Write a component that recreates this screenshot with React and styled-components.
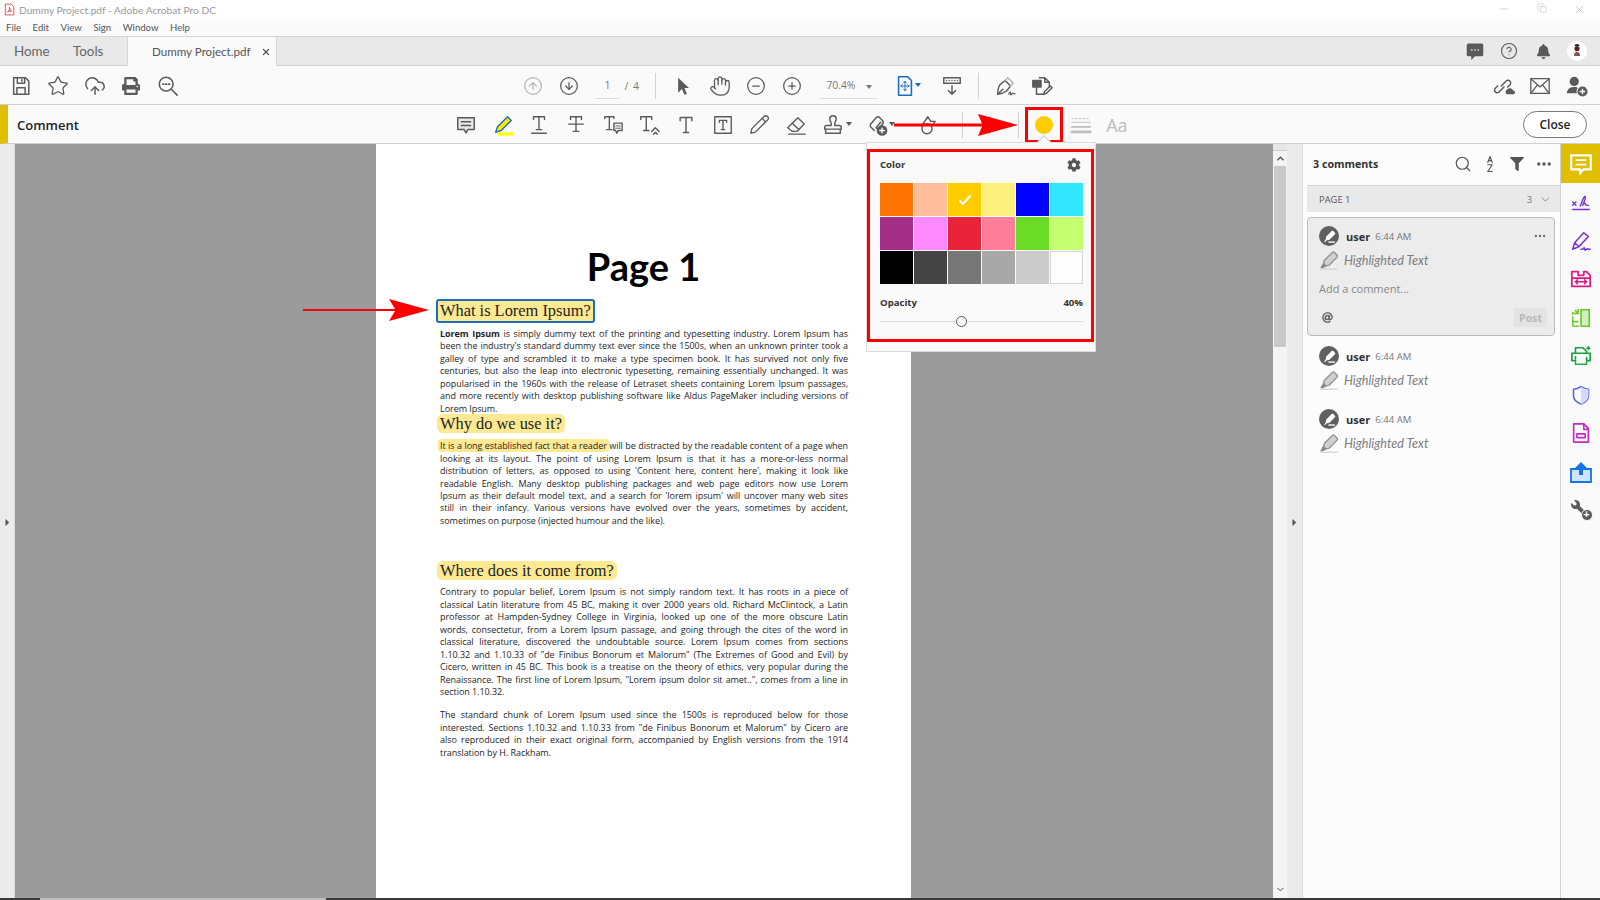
import React from 'react';
import styled, { createGlobalStyle } from 'styled-components';
import {
  Star, CloudUpload, CircleArrowUp, CircleArrowDown, CircleMinus, CirclePlus, Hand,
  Search, ChevronDown, ChevronUp, CircleHelp, Pencil, Ellipsis, X, Minus, Copy,
} from 'lucide-react';
import { FaCog, FaBell, FaFilter, FaPrint, FaCaretRight, FaWrench, FaAt } from 'react-icons/fa';

const GlobalStyle = createGlobalStyle`
  html, body { margin: 0; padding: 0; height: 100%; background: #fff; }
  body { font-family: "Open Sans", "Liberation Sans", sans-serif; overflow: hidden; }
  * { box-sizing: border-box; }
`;

const Window = styled.div`
  position: relative;
  width: 1600px;
  height: 900px;
  display: flex;
  flex-direction: column;
  overflow: hidden;
  background: #fafafa;
`;

const TitleBar = styled.div`
  height: 19px;
  flex: none;
  background: #fff;
  display: flex;
  align-items: center;
  padding-left: 3px;
  color: #9a9a9a;
  font-family: Lato, sans-serif;
  font-size: 10.2px;
`;

const TitleText = styled.span`
  margin-left: 3px;
`;

const WindowControls = styled.div`
  margin-left: auto;
  margin-right: 2px;
  display: flex;
  color: #a5a5a5;
`;

const WindowControl = styled.div`
  width: 37.5px;
  display: flex;
  justify-content: center;
`;

const MenuBar = styled.div`
  height: 18px;
  flex: none;
  background: #fafafa;
  border-bottom: 1px solid #d5d5d5;
  display: flex;
  align-items: center;
  padding-left: 6px;
  gap: 11.5px;
  font-family: Lato, sans-serif;
  font-size: 9.6px;
  color: #555;
`;

const TabBar = styled.div`
  height: 29px;
  flex: none;
  background: #e9e9e9;
  border-bottom: 1px solid #d5d5d5;
  display: flex;
  align-items: stretch;
  color: #666;
`;

const PlainTab = styled.div`
  font-family: Lato, sans-serif;
  font-size: 13.4px;
  width: ${(p) => p.$w}px;
  display: flex;
  align-items: center;
  margin-left: ${(p) => p.$ml}px;
`;

const ActiveTab = styled.div`
  width: 150px;
  margin-left: 25px;
  margin-bottom: -1px;
  background: #fafafa;
  border-left: 1px solid #d5d5d5;
  border-right: 1px solid #d5d5d5;
  display: flex;
  align-items: center;
  padding-left: 24px;
  font-family: Lato, sans-serif;
  font-size: 11.6px;
  white-space: nowrap;
  color: #555;
`;

const TabClose = styled.span`
  display: flex;
  margin-left: 10px;
  color: #555;
`;

const TabRight = styled.div`
  margin-left: auto;
  margin-right: 6px;
  display: flex;
  align-items: center;
`;

const ToolBar = styled.div`
  height: 39px;
  flex: none;
  padding: 1px 0 0 3px;
  background: #fafafa;
  border-bottom: 1px solid #d0d0d0;
  display: flex;
  align-items: center;
`;

const Cell = styled.div`
  flex: none;
  width: ${(p) => p.$w || 36.7}px;
  margin-left: ${(p) => p.$ml || 0}px;
  height: 30px;
  display: flex;
  align-items: center;
  justify-content: ${(p) => (p.$start ? 'flex-start' : 'center')};
  color: ${(p) => p.$c || '#5a5a5a'};
  position: relative;
`;

const CellIcon = styled.span`
  display: flex;
  margin-left: ${(p) => p.$ml}px;
`;

const Caret = styled.span`
  position: absolute;
  left: ${(p) => p.$x}px;
  top: 12px;
  width: 0;
  height: 0;
  border-left: 3px solid transparent;
  border-right: 3px solid transparent;
  border-top: 4px solid ${(p) => p.$c || '#5a5a5a'};
`;

const PageField = styled.div`
  margin-left: 8px;
  width: 24px;
  height: 26px;
  border-bottom: 1px solid #ddd;
  display: flex;
  align-items: center;
  justify-content: center;
  font-size: 10.5px;
  color: #777;
`;

const PageTotal = styled.div`
  margin-left: 5px;
  width: 20px;
  font-size: 10.5px;
  color: #777;
  word-spacing: 2px;
`;

const Separator = styled.div`
  flex: none;
  width: 1px;
  height: 26px;
  margin-left: ${(p) => p.$ml}px;
  background: #d2d2d2;
`;

const ZoomField = styled.div`
  margin-left: 10px;
  width: 58px;
  height: 26px;
  border-bottom: 1px solid #ddd;
  display: flex;
  align-items: center;
  padding-left: 6px;
  font-size: 10.3px;
  color: #777;
  position: relative;
`;

const RightGroup = styled.div`
  margin-left: auto;
  margin-right: 5px;
  display: flex;
`;

const CommentBar = styled.div`
  height: 39px;
  flex: none;
  position: relative;
  padding-top: 1px;
  background: #fafafa;
  border-bottom: 1px solid #d0d0d0;
  border-left: 8px solid #e0bf00;
  display: flex;
  align-items: center;
`;

const CommentTitle = styled.div`
  width: 439.6px;
  padding-left: 9px;
  font-size: 13px;
  font-weight: 600;
  color: #222;
`;

const ColorButton = styled.div`
  flex: none;
  position: relative;
  margin-left: 6px;
  width: 38px;
  height: 36px;
  border: 3px solid #f00;
  display: flex;
  align-items: center;
  justify-content: center;
`;

const ColorDot = styled.div`
  width: 18px;
  height: 18px;
  border-radius: 50%;
  background: #ffcc00;
`;

const AaLabel = styled.div`
  font-size: 18px;
  color: #bdbdbd;
`;

const CloseButton = styled.button`
  margin-left: auto;
  margin-right: 13px;
  width: 64px;
  height: 27px;
  border-radius: 14px;
  border: 1px solid #777;
  background: #fff;
  font-family: "Open Sans", sans-serif;
  font-size: 12px;
  font-weight: 600;
  color: #222;
`;

const Annotation = styled.svg`
  position: absolute;
  z-index: 5;
  left: ${(p) => p.$x}px;
  top: ${(p) => p.$y}px;
`;

const Main = styled.div`
  flex: 1;
  min-height: 0;
  display: flex;
  position: relative;
`;

const CollapseStrip = styled.div`
  flex: none;
  width: ${(p) => p.$w}px;
  background: #ebebeb;
  display: flex;
  align-items: center;
  justify-content: center;
  padding-top: 2px;
  color: #555;
  border-right: 1px solid #dcdcdc;
`;

const DocArea = styled.div`
  flex: none;
  position: relative;
  width: 1258px;
  background: #9b9b9b;
  padding-left: 361px;
`;

const PageSheet = styled.div`
  width: 535px;
  height: 100%;
  background: #fff;
  padding-top: 100px;
  color: #1e1e1e;
`;

const PageHeading = styled.div`
  height: 44px;
  line-height: 44px;
  text-align: center;
  font-family: Lato, "Liberation Sans", sans-serif;
  font-weight: 700;
  font-size: 38px;
  color: #000;
  margin-bottom: 11px;
`;

const SectionHeading = styled.div`
  margin-left: ${(p) => (p.$focused ? 60 : 61)}px;
  margin-top: ${(p) => p.$mt}px;
  width: fit-content;
  height: ${(p) => (p.$focused ? 24 : 19)}px;
  padding: 0 ${(p) => (p.$focused ? 2 : 3)}px;
  line-height: ${(p) => (p.$focused ? 20 : 19)}px;
  font-family: "Liberation Serif", serif;
  font-size: 16.4px;
  color: #222;
  background: #fde992;
  border-radius: ${(p) => (p.$focused ? 3 : 6)}px;
  border: ${(p) => (p.$focused ? '2px solid #1a6cc0' : 'none')};
`;

const Paragraph = styled.div`
  margin-left: 64px;
  margin-top: ${(p) => p.$mt}px;
  width: 408px;
  font-size: 9px;
  letter-spacing: -0.05px;
  line-height: 12.45px;
`;

const Line = styled.div`
  text-align: justify;
  text-align-last: ${(p) => (p.$last ? 'left' : 'justify')};
`;

const Marked = styled.span`
  background: #fde992;
  box-shadow: 2px 0 0 #fde992, -2px 0 0 #fde992;
  border-radius: 3px;
`;

const ScrollBar = styled.div`
  flex: none;
  width: 14px;
  background: #f4f4f4;
  position: relative;
  display: flex;
  flex-direction: column;
  align-items: center;
  color: #444;
`;

const ScrollCap = styled.div`
  width: 100%;
  height: 7px;
  background: #e6e6e6;
  border-bottom: 1px solid #cfcfcf;
`;

const ScrollArrow = styled.div`
  display: flex;
  height: ${(p) => p.$h}px;
  align-items: center;
  margin-top: ${(p) => p.$mt || 0}px;
`;

const ScrollThumb = styled.div`
  width: 12px;
  height: 181px;
  background: #c9c9c9;
`;

const Panel = styled.div`
  flex: none;
  width: 258px;
  background: #fcfcfc;
  border-right: 1px solid #d0d0d0;
  display: flex;
  flex-direction: column;
`;

const PanelHead = styled.div`
  height: 41px;
  flex: none;
  display: flex;
  align-items: center;
  padding: 0 0 2px 10px;
  font-size: 10.7px;
  font-weight: 700;
  color: #333;
`;

const PanelTools = styled.div`
  margin-left: auto;
  display: flex;
  margin-right: 3px;
  color: #555;
`;

const PanelTool = styled.div`
  width: 27px;
  display: flex;
  justify-content: center;
  align-items: center;
`;

const PageRow = styled.div`
  height: 27px;
  flex: none;
  margin-left: 4px;
  background: #e9e9e9;
  border-top: 1px solid #d5d5d5;
  display: flex;
  align-items: center;
  padding-left: 12px;
  font-size: 9.4px;
  color: #555;
`;

const PageCount = styled.div`
  margin-left: auto;
  margin-right: 8px;
  display: flex;
  align-items: center;
  gap: 7px;
  color: #777;
`;

const ActiveCard = styled.div`
  margin: 5px 5px 0 4px;
  height: 119px;
  flex: none;
  background: #ececec;
  border: 1px solid #bdbdbd;
  border-radius: 4px;
  padding: 8px 7px 0 11px;
  display: flex;
  flex-direction: column;
`;

const PlainCard = styled.div`
  margin: ${(p) => p.$mt}px 0 0 4px;
  padding: 0 12px;
  display: flex;
  flex-direction: column;
`;

const CardHead = styled.div`
  display: flex;
  align-items: center;
  height: 20px;
`;

const Avatar = styled.div`
  width: 20px;
  height: 20px;
  border-radius: 50%;
  background: #606060;
  color: #fff;
  display: flex;
  align-items: center;
  justify-content: center;
`;

const UserName = styled.div`
  margin-left: 7px;
  font-size: 11px;
  font-weight: 700;
  color: #333;
`;

const TimeStamp = styled.div`
  margin-left: 5px;
  font-size: 9.6px;
  color: #777;
`;

const CardMenu = styled.div`
  margin-left: auto;
  display: flex;
  color: #666;
`;

const TypeRow = styled.div`
  display: flex;
  align-items: center;
  margin-top: 4px;
  height: 20px;
  color: #8c8c8c;
`;

const TypeLabel = styled.span`
  margin-left: 5px;
  font-family: Lato, sans-serif;
  font-style: italic;
  font-size: 12.6px;
  color: #7d7d7d;
`;

const AddComment = styled.div`
  margin-top: 9px;
  height: 18px;
  font-size: 11px;
  color: #888;
  display: flex;
  align-items: center;
`;

const CardFoot = styled.div`
  margin-top: 11px;
  display: flex;
  align-items: center;
  justify-content: space-between;
  color: #666;
  padding-left: 3px;
`;

const PostButton = styled.div`
  width: 33px;
  height: 19px;
  border-radius: 2px;
  background: #e3e3e3;
  color: #b8b8b8;
  font-size: 10.5px;
  font-weight: 700;
  display: flex;
  align-items: center;
  justify-content: center;
`;

const Rail = styled.div`
  flex: none;
  width: 39px;
  background: #fafafa;
  display: flex;
  flex-direction: column;
  align-items: center;
`;

const RailItem = styled.div`
  width: 39px;
  height: ${(p) => p.$h || 38.5}px;
  display: flex;
  align-items: center;
  justify-content: center;
  background: ${(p) => (p.$active ? '#e0bf00' : 'transparent')};
`;

const Popover = styled.div`
  position: absolute;
  z-index: 4;
  left: 866px;
  top: -2px;
  width: 230px;
  height: 210px;
  background: #fafafa;
  border: 1px solid #dcdcdc;
  padding-top: 6px;
`;

const PopArrow = styled.div`
  position: absolute;
  left: 172px;
  top: -6px;
  width: 10px;
  height: 10px;
  background: #fafafa;
  border-left: 1px solid #ccc;
  border-top: 1px solid #ccc;
  transform: rotate(45deg);
`;

const PopFrame = styled.div`
  width: 227px;
  height: 193px;
  border: 3px solid #f00;
  padding: 0 8px 0 10px;
`;

const PopHead = styled.div`
  height: 31px;
  padding: 6px 2px 0 0;
  display: flex;
  align-items: flex-start;
  justify-content: space-between;
  font-size: 9.6px;
  font-weight: 700;
  color: #333;
`;

const Swatches = styled.div`
  display: grid;
  grid-template-columns: repeat(6, 33px);
  grid-auto-rows: 33px;
  gap: 1px;
`;

const Swatch = styled.div`
  background: ${(p) => p.$color};
  border: ${(p) => (p.$light ? '1px solid #d5d5d5' : 'none')};
  display: flex;
  align-items: center;
  justify-content: center;
`;

const OpacityRow = styled.div`
  margin-top: 12px;
  display: flex;
  justify-content: space-between;
  font-size: 9.6px;
  font-weight: 700;
  color: #333;
`;

const SliderTrack = styled.div`
  position: relative;
  margin-top: 12px;
  height: 1px;
  background: #ddd;
`;

const SliderThumb = styled.div`
  position: absolute;
  left: 76px;
  top: -5px;
  width: 11px;
  height: 11px;
  border-radius: 50%;
  background: #fafafa;
  border: 1px solid #555;
`;

const BottomBar = styled.div`
  flex: none;
  height: 2px;
  background: #3a3a3a;
  padding-left: 40px;
`;

const BottomThumb = styled.div`
  width: 286px;
  height: 2px;
  background: #bfbfbf;
`;

const PlusDot = styled.span`
  position: absolute;
  right: -2px;
  bottom: -1px;
  width: 12px;
  height: 12px;
  border-radius: 50%;
  background: #5a5a5a;
  border: 1px solid #fafafa;
  color: #fff;
  font-size: 11px;
  line-height: 9px;
  text-align: center;
  font-weight: 700;
  font-family: "Liberation Sans", sans-serif;
`;

const ToolsWrap = styled.span`
  position: relative;
  display: flex;
  width: 20px;
  height: 20px;
  color: #5a5a5a;
`;

// icons
const Ico = ({ s = 22, w = 1.6, children, color }) => (
  <svg width={s} height={s} viewBox="0 0 24 24" fill="none" stroke="currentColor" strokeWidth={w} strokeLinecap="round" strokeLinejoin="round" color={color}>
    {children}
  </svg>
);

const SaveIcon = () => (
  <Ico><path d="M4 3h13l3.500 3.500V21H4z" /><path d="M8 3v6h8V3M13 5v2M7.500 21v-7h9v7" /></Ico>
);
const PdfIcon = () => (
  <Ico s={13} w={1.5} color="#d9342b"><path d="M5 2h10l5 5v15H5z" /><path d="M9 16c2-1 3.500-4 3-8 .8 4 2 6 4 7-2-.2-5 .2-7 1z" /></Ico>
);
const ZoomDotsIcon = () => (
  <Ico w={1.7}><circle cx="10" cy="10" r="7.500" /><path d="M15.500 15.500L22 22" /><path d="M6.500 10h.8M9.700 10h.8M12.900 10h.8" strokeWidth="2" /></Ico>
);
const CursorIcon = () => (
  <svg width="20" height="22" viewBox="0 0 24 24" fill="currentColor"><path d="M5 2l0 18 4.500-4.500 3 7 3-1.300-3-6.700H18z" /></svg>
);
const FitIcon = () => (
  <Ico s={22} w={1.7} color="#1a6cc0"><path d="M5 2h10l4 4v16H5z" /><path d="M12 7v10M7.500 12h9M12 7l-1.500 1.500M12 7l1.500 1.500M12 17l-1.500-1.500M12 17l1.500-1.500M7.500 12l1.500-1.500M7.500 12L9 13.500M16.500 12L15 10.500M16.500 12L15 13.500" strokeWidth="1" /></Ico>
);
const ReadIcon = () => (
  <Ico><rect x="3" y="3" width="18" height="6" /><path d="M6 6h.01M9 6h.01M12 6h.01M15 6h.01M18 6h.01M12 12v9M8 17l4 4 4-4" /></Ico>
);
const SignPenIcon = () => (
  <Ico w={1.6}>
    <path d="M3 21c0-5 .5-8 2.500-10.500L11 6l6 6-4.500 5.500C10 19.500 7 20.500 3 21z" />
    <path d="M3 21l5.500-5.500" />
    <path d="M11 6l3-3 6 6-3 3" stroke="#b5b5b5" />
    <path d="M15 21c1-3 2-3 2-.5s1.500.5 2-.5 1 1 3 .5" strokeWidth="1.300" />
  </Ico>
);
const EditDocIcon = () => (
  <Ico w={1.6}>
    <path d="M9 3h6l5 5v5M15 3v5h5" />
    <path d="M6 13v8h8" />
    <rect x="2" y="6" width="9" height="7" fill="currentColor" />
    <path d="M14 21l.8-3L21 12l2 2-6 6z" />
  </Ico>
);
const LinkCloudIcon = () => (
  <Ico><path d="M9 12l6-6a3 3 0 014 4l-3 3M12 13l-6 6a3 3 0 01-4-4l3-3" /><path d="M15 21a3 3 0 010-5 4 4 0 017 1 2 2 0 010 4z" fill="currentColor" stroke="none" /></Ico>
);
const MailIcon = () => (
  <Ico w={1.4}><rect x="2" y="4" width="20" height="16" /><path d="M2 4l10 9 10-9M2 20l7-9M22 20l-7-9" /></Ico>
);
const AddUserIcon = () => (
  <svg width="22" height="22" viewBox="0 0 24 24" fill="currentColor">
    <circle cx="9" cy="7" r="5" />
    <path d="M1 20c0-5 4-7 8-7 2 0 3 .5 4 1-1.500 1.500-2 4-1 6z" />
    <circle cx="18" cy="18" r="5.500" />
    <path d="M18 15v6M15 18h6" stroke="#fafafa" strokeWidth="1.500" />
  </svg>
);
const ChatFilled = () => (
  <svg width="18" height="18" viewBox="0 0 24 24" fill="currentColor">
    <path d="M3 2h18a2 2 0 012 2v13a2 2 0 01-2 2H12l-5 5v-5H3a2 2 0 01-2-2V4a2 2 0 012-2z" />
    <path d="M7 10.500h1.500M11.300 10.500h1.500M15.600 10.500h1.500" stroke="#e9e9e9" strokeWidth="2.200" />
  </svg>
);
const UserPhoto = () => (
  <svg width="20" height="20" viewBox="0 0 20 20">
    <circle cx="10" cy="10" r="10" fill="#fff" />
    <path d="M7 15c0-3 1-4 3-4s3 1 3 4z" fill="#7a5a52" />
    <circle cx="10" cy="7.500" r="2.600" fill="#4a2b26" />
    <path d="M7.500 5a2.500 2 0 015 0z" fill="#222" />
    <path d="M9.500 10.500l1 3" stroke="#c33" strokeWidth="1" />
  </svg>
);
const CommentIcon = () => (
  <Ico w={1.6}><path d="M3 4h18v13h-7l-2 3.500-2-3.500H3z" fill="#e7e7e7" /><path d="M7 8.500h10M7 12.500h10" /></Ico>
);
const HighlighterIcon = () => (
  <svg width="22" height="22" viewBox="0 0 24 24" fill="none">
    <path d="M4 20l2-6L17 3l4 4-11 11z" fill="#ffe600" stroke="#1a6cc0" strokeWidth="1.500" strokeLinejoin="round" />
    <rect x="6" y="20" width="17" height="3.500" fill="#ffff00" />
  </svg>
);
const TUnderIcon = () => (
  <Ico w={1.5}><path d="M6 6V3h12v3M12 3v14M9 17h6M4 21h16" /></Ico>
);
const TStrikeIcon = () => (
  <Ico w={1.5}><path d="M6 6V3h12v3M12 3v16M9 19h6M4 11h16" /></Ico>
);
const TNoteIcon = () => (
  <Ico w={1.5}><path d="M3 5V3h10v2M8 3v14M5 17h6M13 10h9v8h-4l-2 3-1-3h-2z" /><path d="M15 13h5M15 15.500h5" strokeWidth="1" /></Ico>
);
const TCaretIcon = () => (
  <Ico w={1.5}><path d="M3 6V3h12v3M9 3v15M6 18h6M15 19l4-4 4 4M17 22l2-2 2 2" /></Ico>
);
const TPlainIcon = () => (
  <Ico s={20} w={1.7}><path d="M5 7V3h14v4M12 3v18M9 21h6" /></Ico>
);
const TBoxIcon = () => (
  <Ico w={1.5}><rect x="3" y="3" width="18" height="18" /><path d="M8 9V7h8v2M12 7v10M10 17h4" /></Ico>
);
const EraserIcon = () => (
  <Ico w={1.5}><path d="M3 15L14 4l7 7-8 8H8z" /><path d="M8 10l7 7" /><path d="M4 22h18" /></Ico>
);
const StampIcon = () => (
  <Ico w={1.6}><path d="M12 2a3.500 3.500 0 013.500 3.500c0 2-1.500 3-1.500 5v2h5a2 2 0 012 2v2H3v-2a2 2 0 012-2h5v-2c0-2-1.500-3-1.500-5A3.500 3.500 0 0112 2zM4 17v4h16v-4" /></Ico>
);
const AttachIcon = () => (
  <Ico w={1.6}><path d="M9 18l-3-3a3 3 0 010-5l5-6a3 3 0 014 0l3 3a3 3 0 010 4l-5 6-2-2 5-6" /><circle cx="17.500" cy="18" r="5" fill="#5a5a5a" /><path d="M17.500 15.500v5M15 18h5" stroke="#fff" /></Ico>
);
const ShapeIcon = () => (
  <Ico w={1.5} s={22}><path d="M6 13l7-10 3 5h5l-4 5" /><circle cx="12" cy="16" r="5.500" /></Ico>
);
const BlueChevron = () => (
  <Ico w={2} color="#1a6cc0"><path d="M7 4l10 8-10 8" /></Ico>
);
const LineWeightIcon = () => (
  <Ico s={22} w={1} color="#bdbdbd">
    <path d="M2 5h2M6 5h2M10 5h2M14 5h2M18 5h2M2 9h20" />
    <path d="M2 14h20" strokeWidth="2" />
    <path d="M2 19.500h20" strokeWidth="3" />
  </Ico>
);
const Marker = () => (
  <svg width="13" height="13" viewBox="0 0 24 24" fill="#fff">
    <path d="M5 17l1-5L16 2c1-1 2-1 3 0l3 3c1 1 1 2 0 3L12 18l-5 1-3 3H2z" />
    <rect x="10" y="21" width="12" height="2.500" />
  </svg>
);
const MarkerRow = () => (
  <svg width="20" height="19" viewBox="0 0 24 24" fill="none" stroke="#8a8a8a" strokeWidth="1.500" strokeLinejoin="round">
    <path d="M5 16l1-4L16 2c1-1 2-1 3 0l3 3c1 1 1 2 0 3L12 18l-4 1z" fill="#cfcfcf" />
    <path d="M5 16l3 3-4 2-2 0z" fill="#8a8a8a" />
    <rect x="1" y="22" width="22" height="2" fill="#d9d9d9" stroke="none" />
  </svg>
);
const RailComment = () => (
  <svg width="26" height="26" viewBox="0 0 24 24" fill="none" stroke="#fff" strokeWidth="2" strokeLinejoin="round">
    <path d="M3 4h18v13h-7l-3 4v-4H3z" />
    <path d="M7 8.500h10M7 12.500h10" strokeWidth="1.600" />
  </svg>
);
const RailFillSign = () => (
  <Ico s={20} w={1.7} color="#7a33d6"><path d="M2 12l4 4M6 12l-4 4M2 21h20M11 17c2-4 4-12 6-12 1 3-2 8-3 11 1-2 2-4 3-2 0 2 1 2 4 2" /></Ico>
);
const RailSign = () => (
  <Ico s={22} w={1.7} color="#7a33d6"><path d="M3 21l2-7L15 3l5 4-10 11zM5 14l5 4M12 21h2c1-2 2-2 2 0s2 0 2 0 1-1 2 0h2" /></Ico>
);
const RailEdit = () => (
  <Ico s={22} w={1.9} color="#d91b86"><path d="M2 4h7v4h6V4h3l4 4v12H2zM2 11h20" /><path d="M6 15h12M6 15l2-2M6 15l2 2M18 15l-2-2M18 15l-2 2" /></Ico>
);
const RailOrganize = () => (
  <Ico s={22} w={1.8} color="#6bc62c"><rect x="12" y="3" width="9" height="18" fill="#d5f0c0" /><path d="M3 11v10h7M3 8V6M3 16h6M6 4l3 3M9 3v4H5" strokeDasharray="2 1.500" /></Ico>
);
const RailPrint = () => (
  <Ico s={22} w={1.8} color="#18a03a"><path d="M2 17V9h20v8h-3M5 17H2M6 9V3h8l4 4v2" /><path d="M6 13v8h12v-8" strokeDasharray="2 1.600" /><path d="M20 2v3M18.500 3.500h3" /></Ico>
);
const RailShield = () => (
  <svg width="20" height="24" viewBox="0 0 24 24" fill="none" stroke="#5560e8" strokeWidth="1.800" strokeLinejoin="round">
    <path d="M12 2c3 2 6 3 9 3v8c0 4-4 8-9 10-5-2-9-6-9-10V5c3 0 6-1 9-3z" />
    <path d="M12 2c3 2 6 3 9 3v8c0 4-4 8-9 10z" fill="#d6d9fb" stroke="none" />
  </svg>
);
const RailDoc = () => (
  <Ico s={22} w={1.8} color="#c42bc4"><path d="M4 2h11l5 5v15H4z" /><path d="M15 2v6h5" /><rect x="7.500" y="13" width="9" height="4" /></Ico>
);
const RailShare = () => (
  <svg width="24" height="24" viewBox="0 0 24 24" fill="none" stroke="#1473e6" strokeWidth="1.800">
    <path d="M6 9H2v13h20V9h-4z" fill="#cfe3fa" />
    <path d="M12 2l6 6h-4v7h-4V8H6z" fill="#1473e6" stroke="none" />
  </svg>
);
const RailTools = () => (
  <ToolsWrap>
    <FaWrench size={16} style={{ transform: 'scaleX(-1)' }} />
    <PlusDot>+</PlusDot>
  </ToolsWrap>
);
const AzIcon = () => (
  <Ico s={18} w={1.5}><path d="M9 10l3-8 3 8M10 7.500h4M9 13h6l-6 9h6" /></Ico>
);

const SWATCHES = [
  '#ff7300', '#ffbe9b', '#ffcc00', '#fff180', '#0000ff', '#33e6ff',
  '#a42e85', '#ff8aff', '#e8233a', '#ff7f9b', '#6adb26', '#c3ff70',
  '#000000', '#444444', '#777777', '#a8a8a8', '#cbcbcb', '#fdfdfd',
];

const PARA_ONE = [
  <><b>Lorem Ipsum</b> is simply dummy text of the printing and typesetting industry. Lorem Ipsum has</>,
  "been the industry's standard dummy text ever since the 1500s, when an unknown printer took a",
  'galley of type and scrambled it to make a type specimen book. It has survived not only five',
  'centuries, but also the leap into electronic typesetting, remaining essentially unchanged. It was',
  'popularised in the 1960s with the release of Letraset sheets containing Lorem Ipsum passages,',
  'and more recently with desktop publishing software like Aldus PageMaker including versions of',
  'Lorem Ipsum.',
];
const PARA_TWO = [
  <><Marked>It is a long established fact that a reader</Marked> will be distracted by the readable content of a page when</>,
  'looking at its layout. The point of using Lorem Ipsum is that it has a more-or-less normal',
  "distribution of letters, as opposed to using 'Content here, content here', making it look like",
  'readable English. Many desktop publishing packages and web page editors now use Lorem',
  "Ipsum as their default model text, and a search for 'lorem ipsum' will uncover many web sites",
  'still in their infancy. Various versions have evolved over the years, sometimes by accident,',
  'sometimes on purpose (injected humour and the like).',
];
const PARA_THREE = [
  'Contrary to popular belief, Lorem Ipsum is not simply random text. It has roots in a piece of',
  'classical Latin literature from 45 BC, making it over 2000 years old. Richard McClintock, a Latin',
  'professor at Hampden-Sydney College in Virginia, looked up one of the more obscure Latin',
  'words, consectetur, from a Lorem Ipsum passage, and going through the cites of the word in',
  'classical literature, discovered the undoubtable source. Lorem Ipsum comes from sections',
  '1.10.32 and 1.10.33 of "de Finibus Bonorum et Malorum" (The Extremes of Good and Evil) by',
  'Cicero, written in 45 BC. This book is a treatise on the theory of ethics, very popular during the',
  'Renaissance. The first line of Lorem Ipsum, "Lorem ipsum dolor sit amet..", comes from a line in',
  'section 1.10.32.',
];
const PARA_FOUR = [
  'The standard chunk of Lorem Ipsum used since the 1500s is reproduced below for those',
  'interested. Sections 1.10.32 and 1.10.33 from "de Finibus Bonorum et Malorum" by Cicero are',
  'also reproduced in their exact original form, accompanied by English versions from the 1914',
  'translation by H. Rackham.',
];

const Lines = ({ items, mt }) => (
  <Paragraph $mt={mt}>
    {items.map((text, i) => (
      <Line key={i} $last={i === items.length - 1}>{text}</Line>
    ))}
  </Paragraph>
);

const CardTop = () => (
  <>
    <Avatar><Marker /></Avatar>
    <UserName>user</UserName>
    <TimeStamp>6:44 AM</TimeStamp>
  </>
);

const App = () => (
  <Window>
    <GlobalStyle />
    <TitleBar>
      <PdfIcon />
      <TitleText>Dummy Project.pdf - Adobe Acrobat Pro DC</TitleText>
      <WindowControls>
        <WindowControl><Minus size={12} strokeWidth={1} /></WindowControl>
        <WindowControl><Copy size={10} strokeWidth={1} /></WindowControl>
        <WindowControl><X size={13} strokeWidth={1} /></WindowControl>
      </WindowControls>
    </TitleBar>
    <MenuBar>
      <span>File</span><span>Edit</span><span>View</span><span>Sign</span><span>Window</span><span>Help</span>
    </MenuBar>
    <TabBar>
      <PlainTab $ml={14} $w={34}>Home</PlainTab>
      <PlainTab $ml={25} $w={29}>Tools</PlainTab>
      <ActiveTab>
        Dummy Project.pdf
        <TabClose><X size={10} strokeWidth={3} /></TabClose>
      </ActiveTab>
      <TabRight>
        <Cell $w={34}><ChatFilled /></Cell>
        <Cell $w={34}><CircleHelp size={18} strokeWidth={1.5} /></Cell>
        <Cell $w={34}><FaBell size={15} /></Cell>
        <Cell $w={34}><UserPhoto /></Cell>
      </TabRight>
    </TabBar>
    <ToolBar>
      <Cell><SaveIcon /></Cell>
      <Cell><Star size={22} strokeWidth={1.4} /></Cell>
      <Cell><CloudUpload size={22} strokeWidth={1.6} /></Cell>
      <Cell><FaPrint size={18} /></Cell>
      <Cell><ZoomDotsIcon /></Cell>
      <Cell $w={36.5} $ml={328} $c="#b5b5b5"><CircleArrowUp size={20} strokeWidth={1.5} /></Cell>
      <Cell $w={36.5}><CircleArrowDown size={20} strokeWidth={1.5} /></Cell>
      <PageField>1</PageField>
      <PageTotal>/ 4</PageTotal>
      <Separator $ml={11} />
      <Cell $w={36} $ml={10}><CursorIcon /></Cell>
      <Cell $w={36}><Hand size={22} strokeWidth={1.4} /></Cell>
      <Cell $w={36}><CircleMinus size={20} strokeWidth={1.5} /></Cell>
      <Cell $w={36}><CirclePlus size={20} strokeWidth={1.5} /></Cell>
      <ZoomField>70.4%<Caret $x={46} $c="#777" /></ZoomField>
      <Cell $w={36} $ml={14} $start><CellIcon $ml={2}><FitIcon /></CellIcon><Caret $x={23} $c="#1a6cc0" /></Cell>
      <Cell $w={36} $ml={6}><ReadIcon /></Cell>
      <Separator $ml={8} />
      <Cell $w={36} $ml={9}><SignPenIcon /></Cell>
      <Cell $w={36}><EditDocIcon /></Cell>
      <RightGroup>
        <Cell $w={36.5}><LinkCloudIcon /></Cell>
        <Cell $w={36.5}><MailIcon /></Cell>
        <Cell $w={36.5}><AddUserIcon /></Cell>
      </RightGroup>
    </ToolBar>
    <CommentBar>
      <CommentTitle>Comment</CommentTitle>
      <Cell><CommentIcon /></Cell>
      <Cell><HighlighterIcon /></Cell>
      <Cell><TUnderIcon /></Cell>
      <Cell><TStrikeIcon /></Cell>
      <Cell><TNoteIcon /></Cell>
      <Cell><TCaretIcon /></Cell>
      <Cell><TPlainIcon /></Cell>
      <Cell><TBoxIcon /></Cell>
      <Cell><Pencil size={21} strokeWidth={1.5} /></Cell>
      <Cell><EraserIcon /></Cell>
      <Cell><StampIcon /><Caret $x={32} /></Cell>
      <Cell $w={44} $ml={8} $start><CellIcon $ml={7}><AttachIcon /></CellIcon><Caret $x={30} /></Cell>
      <Cell $ml={5}><ShapeIcon /></Cell>
      <Separator $ml={17} />
      <Cell $w={36} $ml={13}><BlueChevron /></Cell>
      <Separator $ml={6} />
      <ColorButton><ColorDot /></ColorButton>
      <Cell $w={36}><LineWeightIcon /></Cell>
      <Cell $w={36}><AaLabel>Aa</AaLabel></Cell>
      <CloseButton>Close</CloseButton>
      <Annotation $x={886} $y={8} width="130" height="24" viewBox="0 0 130 24">
        <path d="M0 10.500h88L84 1l40 11-40 11 4-9.500H0z" fill="#f00" />
      </Annotation>
    </CommentBar>
    <Main>
      <CollapseStrip $w={15}><FaCaretRight size={11} /></CollapseStrip>
      <DocArea>
        <PageSheet>
          <PageHeading>Page 1</PageHeading>
          <SectionHeading $focused $mt={0}>What is Lorem Ipsum?</SectionHeading>
          <Lines items={PARA_ONE} mt={5} />
          <SectionHeading $mt={-1}>Why do we use it?</SectionHeading>
          <Lines items={PARA_TWO} mt={7} />
          <SectionHeading $mt={34}>Where does it come from?</SectionHeading>
          <Lines items={PARA_THREE} mt={6} />
          <Lines items={PARA_FOUR} mt={10.8} />
        </PageSheet>
        <Annotation $x={288} $y={155} width="126" height="22" viewBox="0 0 126 22">
          <path d="M0 10h92L86 0l40 11-40 11 6-10H0z" fill="#f00" />
        </Annotation>
      </DocArea>
      <ScrollBar>
        <ScrollCap />
        <ScrollArrow $h={15}><ChevronUp size={11} strokeWidth={3} /></ScrollArrow>
        <ScrollThumb />
        <ScrollArrow $h={10} $mt={537}><ChevronDown size={11} strokeWidth={2} /></ScrollArrow>
      </ScrollBar>
      <CollapseStrip $w={16}><FaCaretRight size={11} /></CollapseStrip>
      <Panel>
        <PanelHead>
          3 comments
          <PanelTools>
            <PanelTool><Search size={18} strokeWidth={1.6} /></PanelTool>
            <PanelTool><AzIcon /></PanelTool>
            <PanelTool><FaFilter size={14} /></PanelTool>
            <PanelTool><Ellipsis size={18} strokeWidth={2.4} /></PanelTool>
          </PanelTools>
        </PanelHead>
        <PageRow>
          PAGE 1
          <PageCount>3 <ChevronDown size={13} strokeWidth={1.5} /></PageCount>
        </PageRow>
        <ActiveCard>
          <CardHead>
            <CardTop />
            <CardMenu><Ellipsis size={14} strokeWidth={2} /></CardMenu>
          </CardHead>
          <TypeRow><MarkerRow /><TypeLabel>Highlighted Text</TypeLabel></TypeRow>
          <AddComment>Add a comment...</AddComment>
          <CardFoot>
            <FaAt size={11} />
            <PostButton>Post</PostButton>
          </CardFoot>
        </ActiveCard>
        <PlainCard $mt={10}>
          <CardHead><CardTop /></CardHead>
          <TypeRow><MarkerRow /><TypeLabel>Highlighted Text</TypeLabel></TypeRow>
        </PlainCard>
        <PlainCard $mt={19}>
          <CardHead><CardTop /></CardHead>
          <TypeRow><MarkerRow /><TypeLabel>Highlighted Text</TypeLabel></TypeRow>
        </PlainCard>
      </Panel>
      <Rail>
        <RailItem $active $h={39}><RailComment /></RailItem>
        <RailItem><RailFillSign /></RailItem>
        <RailItem><RailSign /></RailItem>
        <RailItem><RailEdit /></RailItem>
        <RailItem><RailOrganize /></RailItem>
        <RailItem><RailPrint /></RailItem>
        <RailItem><RailShield /></RailItem>
        <RailItem><RailDoc /></RailItem>
        <RailItem><RailShare /></RailItem>
        <RailItem><RailTools /></RailItem>
      </Rail>
      <Popover>
        <PopArrow />
        <PopFrame>
          <PopHead>
            Color
            <FaCog size={14} color="#555" />
          </PopHead>
          <Swatches>
            {SWATCHES.map((c) => (
              <Swatch key={c} $color={c} $light={c === '#fdfdfd'}>
                {c === '#ffcc00' && (
                  <svg width="14" height="12" viewBox="0 0 14 12" fill="none" stroke="#fff" strokeWidth="2.200">
                    <path d="M1.500 6.500l3.500 3.500 7.500-8.500" />
                  </svg>
                )}
              </Swatch>
            ))}
          </Swatches>
          <OpacityRow><span>Opacity</span><span>40%</span></OpacityRow>
          <SliderTrack><SliderThumb /></SliderTrack>
        </PopFrame>
      </Popover>
    </Main>
    <BottomBar><BottomThumb /></BottomBar>
  </Window>
);

export default App;
